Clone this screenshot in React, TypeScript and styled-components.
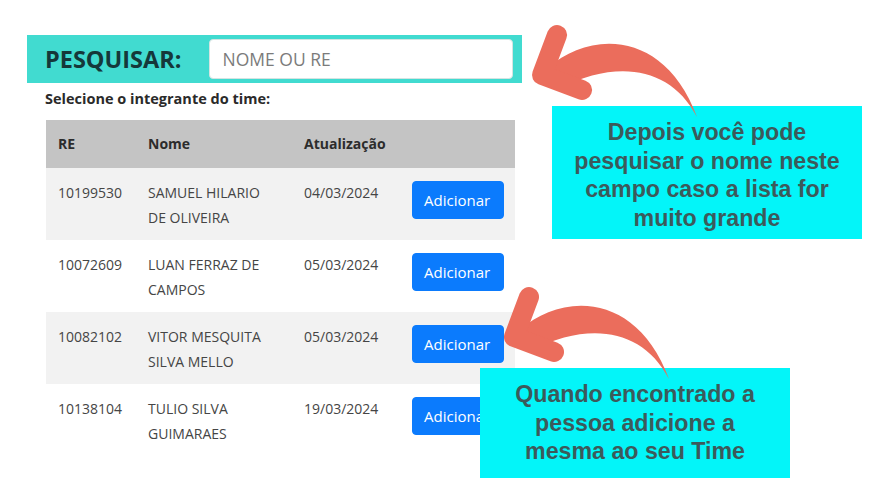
import React from "react";
import styled, { createGlobalStyle } from "styled-components";

const GlobalStyle = createGlobalStyle`
  html, body { margin: 0; padding: 0; background: #ffffff; }
  body { font-family: "Open Sans", "Noto Sans", sans-serif; }
  * { box-sizing: border-box; }
`;

const Page = styled.div`
  position: relative;
  width: 875px;
  height: 501px;
  overflow: hidden;
  background: #ffffff;
  padding: 35px 0 0 27px;
`;

const Panel = styled.div`
  width: 495px;
  display: flex;
  flex-direction: column;
`;

const SearchBar = styled.div`
  height: 48px;
  background: #41dbd0;
  display: flex;
  align-items: center;
  padding: 0 9px 0 18px;
  gap: 28px;
`;

const SearchLabel = styled.span`
  font-family: "Open Sans", sans-serif;
  font-weight: 700;
  font-size: 23.5px;
  color: #15383a;
`;

const SearchInput = styled.input`
  flex: 1;
  height: 40px;
  border: 1px solid #d4e4e2;
  border-radius: 4px;
  background: #ffffff;
  padding: 0 12px;
  font-family: "Open Sans", sans-serif;
  font-size: 17.5px;
  color: #333;
  outline: none;
  &::placeholder { color: #7b7b7b; }
`;

const Caption = styled.div`
  font-family: "Open Sans", sans-serif;
  font-weight: 700;
  font-size: 14.5px;
  color: #2a2a2a;
  padding: 6px 0 0 18px;
  height: 37px;
`;

const Table = styled.table`
  margin-left: 19px;
  width: 469px;
  border-collapse: collapse;
  table-layout: fixed;
  font-family: "Open Sans", sans-serif;
  font-size: 14px;
`;

const HeadRow = styled.tr`
  background: #c4c4c4;
`;

const Th = styled.th`
  text-align: left;
  font-weight: 700;
  color: #2c2c2c;
  padding: 11px 12px 12px;
  line-height: 25px;
`;

const Row = styled.tr<{ $striped: boolean }>`
  background: ${(p) => (p.$striped ? "#f2f2f2" : "#ffffff")};
`;

const Td = styled.td`
  vertical-align: top;
  color: #454545;
  padding: 12px 12px 10px;
  line-height: 25px;
  height: 72px;
`;

const ActionTd = styled(Td)`
  padding-top: 13px;
`;

const AddButton = styled.button`
  background: #0b7bfd;
  color: #ffffff;
  border: 1px solid #0b7bfd;
  border-radius: 4px;
  font-family: "Open Sans", sans-serif;
  font-size: 15px;
  line-height: 24px;
  padding: 6px 11px;
  width: 92px;
  white-space: nowrap;
  overflow: hidden;
  text-align: left;
  cursor: pointer;
`;

const Callout = styled.div<{ $left: number; $top: number; $width: number; $height: number }>`
  position: absolute;
  left: ${(p) => p.$left}px;
  top: ${(p) => p.$top}px;
  width: ${(p) => p.$width}px;
  height: ${(p) => p.$height}px;
  background: #03f5f9;
  padding-top: 12px;
  font-family: "Liberation Sans", Arial, sans-serif;
  font-weight: 700;
  font-size: 23.2px;
  line-height: 28.5px;
  color: #3c5a5b;
  text-align: center;
  z-index: 1;
`;

const ArrowWrap = styled.svg<{ $left: number; $top: number }>`
  position: absolute;
  left: ${(p) => p.$left}px;
  top: ${(p) => p.$top}px;
  z-index: 2;
  overflow: visible;
`;

const ARROW = "#eb6d5c";

function CurvedArrow({ left, top }: { left: number; top: number }) {
  return (
    <ArrowWrap $left={left} $top={top} width={185} height={100} viewBox="0 0 185 100">
      <path d="M 28 48 C 70 10, 145 10, 177 97 C 150 45, 95 40, 40 68 Z" fill={ARROW} />
      <polyline
        points="37,15 22,55 62,70"
        fill="none"
        stroke={ARROW}
        strokeWidth={20}
        strokeLinecap="round"
        strokeLinejoin="round"
      />
    </ArrowWrap>
  );
}

const rows = [
  { re: "10199530", nome: "SAMUEL HILARIO DE OLIVEIRA", data: "04/03/2024" },
  { re: "10072609", nome: "LUAN FERRAZ DE CAMPOS", data: "05/03/2024" },
  { re: "10082102", nome: "VITOR MESQUITA SILVA MELLO", data: "05/03/2024" },
  { re: "10138104", nome: "TULIO SILVA GUIMARAES", data: "19/03/2024" },
];

export default function App() {
  return (
    <>
      <GlobalStyle />
      <Page>
        <Panel>
          <SearchBar>
            <SearchLabel>PESQUISAR:</SearchLabel>
            <SearchInput placeholder="NOME OU RE" />
          </SearchBar>
          <Caption>Selecione o integrante do time:</Caption>
          <Table>
            <colgroup>
              <col style={{ width: 90 }} />
              <col style={{ width: 156 }} />
              <col style={{ width: 108 }} />
              <col style={{ width: 115 }} />
            </colgroup>
            <thead>
              <HeadRow>
                <Th>RE</Th>
                <Th>Nome</Th>
                <Th>Atualização</Th>
                <Th />
              </HeadRow>
            </thead>
            <tbody>
              {rows.map((r, i) => (
                <Row key={r.re} $striped={i % 2 === 0}>
                  <Td>{r.re}</Td>
                  <Td>{r.nome}</Td>
                  <Td>{r.data}</Td>
                  <ActionTd>
                    <AddButton>Adicionar</AddButton>
                  </ActionTd>
                </Row>
              ))}
            </tbody>
          </Table>
        </Panel>

        <Callout $left={552} $top={106} $width={310} $height={133}>
          Depois você pode
          <br />
          pesquisar o nome neste
          <br />
          campo caso a lista for
          <br />
          muito grande
        </Callout>
        <Callout $left={480} $top={368} $width={310} $height={110}>
          Quando encontrado a
          <br />
          pessoa adicione a
          <br />
          mesma ao seu Time
        </Callout>

        <CurvedArrow left={520} top={20} />
        <CurvedArrow left={492} top={282} />
      </Page>
    </>
  );
}
